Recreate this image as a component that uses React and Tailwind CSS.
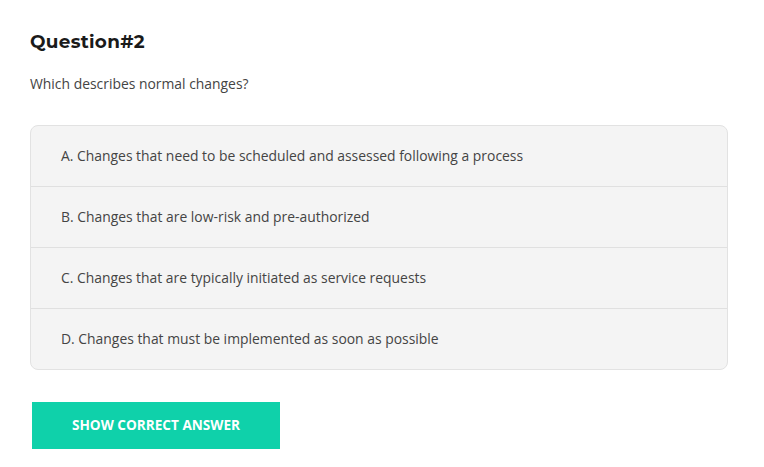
export default function App() {
  const options = [
    "A. Changes that need to be scheduled and assessed following a process",
    "B. Changes that are low-risk and pre-authorized",
    "C. Changes that are typically initiated as service requests",
    "D. Changes that must be implemented as soon as possible",
  ];

  return (
    <div className="min-h-[467px] bg-white px-[30px] pt-[30px] font-['Open_Sans',sans-serif]">
      <h2 className="text-[18.4px] font-bold leading-[24px] tracking-[0.3px] text-[#1a1a1a] font-['Montserrat','Open_Sans',sans-serif]">
        Question#2
      </h2>
      <p className="mt-[20px] text-[13.9px] leading-[20px] text-[#444]">
        Which describes normal changes?
      </p>

      {/* Options */}
      <div className="mt-[31px] w-[698px] overflow-hidden rounded-[8px] border border-[#e2e2e2] bg-[#f4f4f4]">
        {options.map((opt, i) => (
          <div
            key={i}
            className={
              "flex items-center px-[30px] text-[13.9px] text-[#444]" +
              (i > 0 ? " h-[61px] border-t border-[#e0e0e0]" : " h-[60px]")
            }
          >
            {opt}
          </div>
        ))}
      </div>

      <button className="ml-[2px] mt-[32px] flex h-[47px] w-[248px] items-center justify-center bg-[#0fd1aa] text-[13.6px] font-bold text-white">
        SHOW CORRECT ANSWER
      </button>
    </div>
  );
}
